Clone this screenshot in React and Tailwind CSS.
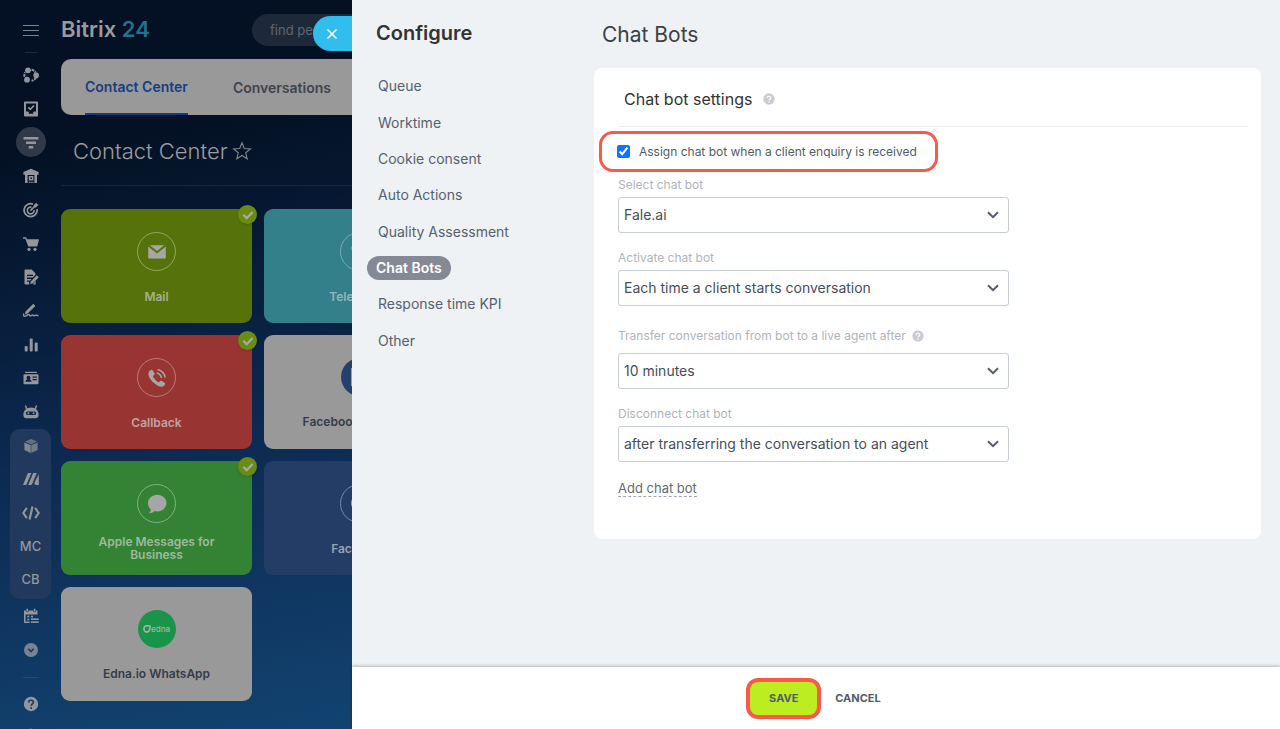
import React from "react";

/* ---------- Rail icons, drawn on a 16x16 grid ---------- */

function Icon({ children, className = "size-4" }) {
  return (
    <svg viewBox="0 0 16 16" className={className} fill="currentColor" aria-hidden="true">
      {children}
    </svg>
  );
}

const stroke = { fill: "none", stroke: "currentColor" };

const FeedIcon = () => (
  <Icon>
    <path d="M8.600 2.700a5.600 5.600 0 0 1 4 3M12.900 10.500a5.600 5.600 0 0 1-4.400 3.200M1.500 9.800a6.500 6.500 0 0 1 .6-4.500" {...stroke} strokeWidth="2" strokeDasharray="2.800 0.800" />
    <circle cx="5" cy="3.300" r="2.900" />
    <circle cx="13.200" cy="8.400" r="2.800" />
    <circle cx="4" cy="12.700" r="2.900" />
  </Icon>
);
const TaskIcon = () => (
  <Icon>
    <path fillRule="evenodd" d="M2 .6h12a1 1 0 0 1 1 1v12.800a1 1 0 0 1-1 1H2a1 1 0 0 1-1-1V1.600a1 1 0 0 1 1-1Zm1 2v8h2.200c.4 0 .6.3.6.6v1.600h4.400v-1.600c0-.3.200-.6.600-.6H13v-8H3Z" />
    <path d="m5.300 6.300 2 2L11 4.500" {...stroke} strokeWidth="1.700" />
  </Icon>
);
const FunnelIcon = () => (
  <Icon>
    <rect x="0.500" y="3" width="15" height="2.600" rx="0.600" />
    <rect x="3" y="7.500" width="10" height="2.600" rx="0.600" />
    <rect x="5.700" y="12" width="4.600" height="2.600" rx="0.600" />
  </Icon>
);
const StoreIcon = () => (
  <Icon>
    <path fillRule="evenodd" d="M8 .8 15.600 4v2.700H14V15H2V6.700H.4V4L8 .8ZM4.600 7v8h1.200v-1.300H7V15h.6v-1.300h1.200V15h.6v-1.300h1.200V15h.8V7H4.600Z" />
    <path fillRule="evenodd" d="M5.800 8h4.600v4.600H5.800V8Zm1.700 1.600v1.500H9V9.600H7.500Z" />
  </Icon>
);
const TargetIcon = () => (
  <Icon>
    <path d="M10 2.100A6.500 6.500 0 1 0 14 7" {...stroke} strokeWidth="1.700" />
    <path d="M8.500 5.200a3.400 3.400 0 1 0 2.500 2.600" {...stroke} strokeWidth="1.600" />
    <path d="M7.400 8.600 12.500 3.500" {...stroke} strokeWidth="1.700" />
    <path d="M10.700 3.300 13.400.4l.5 1.800 1.900.5-2.900 2.800-2 .1-.2-2.300Z" />
  </Icon>
);
const CartIcon = () => (
  <Icon>
    <path d="M0 1.200h2.700c.4 0 .7.2.8.6l.4 1.400h11.500c.4 0 .6.300.5.700l-1.500 5.900c-.1.400-.4.600-.8.600H5.200l-.5-1.300L2.400 2.700H0V1.200Z" />
    <circle cx="6" cy="13.300" r="1.600" />
    <circle cx="12" cy="13.300" r="1.600" />
  </Icon>
);
const DocEditIcon = () => (
  <Icon>
    <path fillRule="evenodd" d="M1.500 1.500c0-.5.400-1 1-1h6.200l3.700 3.700v1.900L9.900 8.600H4v1.300h4.600l-1.500 1.500H4v1.300h2.200V15.500H2.500a1 1 0 0 1-1-1v-13ZM4 5.700V7h6V5.700H4Z" />
    <path d="m7.300 15 .5-2.600 6-6.100 2 2-6 6.100-2.500.6Z" />
    <path d="M12.600 11.800v3.700H9.900" />
  </Icon>
);
const SignIcon = () => (
  <Icon>
    <path d="m2.500 8.500 7.300-7.200c.3-.3.700-.3 1 0l1.100 1.100c.3.300.3.700 0 1L4.600 10.600 1.800 11.400l.7-2.900Z" />
    <path d="M.6 10.500c-.6 2.600.6 3.200 2.400 2.300l2-1.200c1-.6 1.400.2 1.800.9.500.7 1.300.2 2-.3s1.300-.2 1.700.3c.7.800 1.500-.2 2.200-.4.700-.1 1.200.5 2.800.4" {...stroke} strokeWidth="1.400" />
  </Icon>
);
const ChartIcon = () => (
  <Icon>
    <rect x="1.700" y="9" width="3" height="5.500" rx="1" />
    <rect x="6.700" y="1.500" width="3" height="13" rx="1" />
    <rect x="11.700" y="5.500" width="3" height="9" rx="1" />
  </Icon>
);
const IdCardIcon = () => (
  <Icon>
    <rect x="2" y="1.800" width="12" height="1.300" rx="0.500" />
    <path fillRule="evenodd" d="M1.500 4.200h13c.6 0 1 .4 1 1v8c0 .6-.4 1-1 1h-13a1 1 0 0 1-1-1v-8c0-.6.400-1 1-1Zm4 1.600a1.900 1.900 0 0 0-1.900 1.900c0 .8.300 1.400.8 1.800-1.400.4-2 1.200-2 2.300h6.200c0-1.100-.6-1.900-2-2.300.5-.4.800-1 .8-1.800a1.900 1.900 0 0 0-1.900-1.900Zm4 .7v1.200h4.300V6.500H9.500Zm0 2.500v1.200h4.300V9H9.500Z" />
  </Icon>
);
const RobotIcon = () => (
  <Icon>
    <path d="m3.600 5-.9-3M12.400 5l.9-3" {...stroke} strokeWidth="1.400" strokeLinecap="round" />
    <path fillRule="evenodd" d="M8 3.600c4.400 0 7.600 2.900 7.600 7.200 0 2.200-.8 3.500-3 3.500H3.400c-2.200 0-3-1.300-3-3.500 0-4.300 3.200-7.200 7.600-7.200ZM4.600 7.400a1.800 1.800 0 0 0 0 3.600h6.800a1.800 1.800 0 0 0 0-3.600H4.600Z" />
    <circle cx="5.400" cy="9.200" r="1" />
    <circle cx="10.600" cy="9.200" r="1" />
  </Icon>
);
const CubeIcon = () => (
  <Icon>
    <path d="M8 .9 14 3.600 8 6.400 2 3.600 8 .9Z" opacity=".6" />
    <path d="M1.400 4.500 7.700 7.300v7.700l-6.300-3V4.500Z" opacity=".85" />
    <path d="M14.600 4.500 8.300 7.300v7.700l6.300-3V4.500Z" opacity=".7" />
  </Icon>
);
const StripesIcon = () => (
  <Icon>
    <path d="M4.900 2h3.400L3.600 13.200c-.2.500-.6.800-1.100.8H0L4.900 2Z" />
    <path d="M10.200 2h3.600L9 13.200c-.2.500-.6.800-1.100.8H5.200l5-12Z" />
    <path d="M15.800 3V14h-2.300c-1.600 0-2.400-1.200-1.900-2.500L15.800 3Z" />
  </Icon>
);
const CodeIcon = () => (
  <Icon className="size-[18px]">
    <path d="M4.300 3.500 1.200 8l3.100 4.500M11.700 3.500 14.800 8l-3.100 4.500M9.300 2.300 6.700 13.700" {...stroke} strokeWidth="1.900" />
  </Icon>
);
const CalendarIcon = () => (
  <Icon>
    <path d="M4.200.8v2.600M11.600.8v2.600" {...stroke} strokeWidth="1.600" />
    <path d="M1 2.400h2v1.700h2.400V2.400h5v1.700h2.400V2.400h1.700v4.200H2.600v6.800h4.100V15H1.800a.8.800 0 0 1-.8-.8V2.400Z" />
    <rect x="4.300" y="7.700" width="2" height="1.700" />
    <rect x="8" y="7.700" width="2" height="1.700" />
    <rect x="4.300" y="10.600" width="2" height="1.700" />
    <rect x="8" y="10.400" width="7.700" height="1.600" />
    <rect x="8" y="13.300" width="7.700" height="1.600" />
  </Icon>
);
const MoreIcon = () => (
  <Icon>
    <circle cx="8" cy="8" r="7" opacity=".8" />
    <path d="m5.300 6.800 2.700 2.700 2.700-2.700" fill="none" stroke="#113a66" strokeWidth="1.600" />
  </Icon>
);
const HelpIcon = () => (
  <Icon>
    <circle cx="8" cy="8" r="7.200" />
    <path d="M5.700 6.500c0-3 4.700-2.800 4.700-.2 0 1.700-2.300 1.700-2.300 3.500" fill="none" stroke="#123d69" strokeWidth="1.600" />
    <circle cx="8.100" cy="11.900" r="1" fill="#123d69" />
  </Icon>
);
const BellIcon = () => (
  <Icon>
    <path d="M8 .5c.8 0 1.300.5 1.300 1.300 2.200.6 3.500 2.400 3.500 4.800v3.600l1.500 2.300H1.700l1.500-2.300V6.600c0-2.400 1.300-4.200 3.500-4.800C6.700 1 7.200.5 8 .5Z" />
  </Icon>
);

/* ---------- Navigation rail ---------- */

const railMain = [
  ["Feed", FeedIcon],
  ["Tasks", TaskIcon],
  ["CRM", FunnelIcon],
  ["Inventory", StoreIcon],
  ["Marketing", TargetIcon],
  ["Store", CartIcon],
  ["Documents", DocEditIcon],
  ["e-Signature", SignIcon],
  ["Analytics", ChartIcon],
  ["Company", IdCardIcon],
  ["Automation", RobotIcon],
];

function RailButton({ label, active, children }) {
  return (
    <button
      type="button"
      aria-label={label}
      className={
        active
          ? "flex size-[30px] items-center justify-center rounded-full bg-[#2f3947]"
          : "flex size-[30px] items-center justify-center"
      }
    >
      {children}
    </button>
  );
}

function Rail() {
  return (
    <nav aria-label="Main" className="flex w-[61px] shrink-0 flex-col items-center text-[#93979d]">
      <button type="button" aria-label="Menu" className="mt-[14px] flex size-8 shrink-0 flex-col items-center justify-center gap-1 text-[#7d838b]">
        <span className="h-px w-4 bg-current" />
        <span className="h-px w-4 bg-current" />
        <span className="h-px w-4 bg-current" />
      </button>
      <span className="mt-1.5 h-px w-3 shrink-0 bg-[#1b2a3e]" />
      <ul className="mt-[5px] flex h-[371px] shrink-0 flex-col">
        {railMain.map(([label, Glyph]) => (
          <li key={label} className="flex flex-1 items-center">
            <RailButton label={label} active={label === "CRM"}>
              <Glyph />
            </RailButton>
          </li>
        ))}
      </ul>
      <ul className="flex h-[170px] w-[41px] shrink-0 flex-col items-center rounded-[10px] bg-[#20395c] pb-0.5">
        <li className="flex flex-1 items-center">
          <RailButton label="Apps"><CubeIcon /></RailButton>
        </li>
        <li className="flex flex-1 items-center">
          <RailButton label="Market"><StripesIcon /></RailButton>
        </li>
        <li className="flex flex-1 items-center">
          <RailButton label="Developer"><CodeIcon /></RailButton>
        </li>
        <li className="flex flex-1 items-center">
          <a href="#mc" className="text-[13px] font-medium">MC</a>
        </li>
        <li className="flex flex-1 items-center">
          <a href="#cb" className="text-[13px] font-medium">CB</a>
        </li>
      </ul>
      <div className="mt-0.5 flex shrink-0 flex-col gap-1">
        <RailButton label="Calendar"><CalendarIcon /></RailButton>
        <RailButton label="More"><MoreIcon /></RailButton>
      </div>
      <span className="mt-3 h-px w-4 shrink-0 bg-[#264a71]" />
      <div className="mt-[11px] flex shrink-0 flex-col gap-0.5">
        <RailButton label="Help"><HelpIcon /></RailButton>
        <RailButton label="Notifications"><BellIcon /></RailButton>
      </div>
    </nav>
  );
}

/* ---------- Contact Center ---------- */

const MailGlyph = () => (
  <svg viewBox="0 0 18 14" className="w-[18px] text-[#a6a6a6]" fill="currentColor" aria-hidden="true">
    <path d="M1.800.3h14.400L9 6 1.800.3Z" />
    <path d="M.2 1.500 9 8.400l8.800-6.900v11.300c0 .5-.3.800-.8.800H1c-.5 0-.8-.3-.8-.8V1.500Z" />
  </svg>
);
const CallGlyph = () => (
  <svg viewBox="0 0 20 20" className="w-5 text-[#a6a6a6]" fill="currentColor" aria-hidden="true">
    <path d="M2.600 2.900c1.200-1.200 2.300-1.500 3-.7l1.800 2.900c.4.700.3 1.400-.3 1.900l-.8.700c-.4.400-.3.800 0 1.400a14 14 0 0 0 4.300 4.700c.6.400 1.200.5 1.600.1l.8-.7c.5-.5 1.200-.5 1.900-.1l2.700 1.700c.8.500.7 1.400-.3 2.600-1.500 1.700-3.700 1.800-6.600.3A20 20 0 0 1 2.400 9.700C1 6.800 1 4.500 2.600 2.900Z" />
    <path d="M9.700 5a6 6 0 0 1 4.700 5" fill="none" stroke="currentColor" strokeWidth="1.600" />
    <path d="M10.600 1.500a10 10 0 0 1 7.600 8" fill="none" stroke="currentColor" strokeWidth="1.600" />
  </svg>
);
const BubbleGlyph = () => (
  <svg viewBox="0 0 20 20" className="w-5 text-[#a6a6a6]" fill="currentColor" aria-hidden="true">
    <path d="M10.300.8c5.200 0 9.200 3.700 9.200 8.300s-4 8.300-9.200 8.300c-.9 0-1.800-.1-2.700-.3-1.500 1.600-3.300 2.200-5.700 2 1.300-1 1.800-2 1.900-3.500C2.100 14 1 11.700 1 9.100 1 4.500 5.100.8 10.300.8Z" />
  </svg>
);
const FormGlyph = () => (
  <svg viewBox="0 0 18 18" className="w-[18px] text-[#9aa3b3]" fill="none" stroke="currentColor" strokeWidth="2" aria-hidden="true">
    <path d="M1 1h16v16H1zM5 6h8M5 11h8" />
  </svg>
);
const EdnaGlyph = () => (
  <span className="flex items-center text-[#a3b5aa]">
    <svg viewBox="0 0 10 10" className="size-2" aria-hidden="true">
      <path d="M2 1.800C4 .9 6.600.7 8.700 1.300 9 4.400 8.200 7.600 5.600 8.800 3 9.300 1.300 7.500 1.200 5.200c0-1.500.2-2.600.8-3.400Z" fill="none" stroke="currentColor" strokeWidth="1.900" />
    </svg>
    <span className="text-[8px] leading-none font-medium">edna</span>
  </span>
);

const channels = [
  { name: "Mail", card: "bg-[#56730b] text-[#a7b08f]", ring: "border border-[#94a46a] size-[39px]", Glyph: MailGlyph, on: true },
  { name: "Telephony", card: "bg-[#34808a] text-[#95b5b9]", ring: "border border-[#79aab0] size-[39px]", Glyph: CallGlyph },
  { name: "Callback", card: "bg-[#983432] text-[#c0a3a3]", ring: "border border-[#b97c7b] size-[39px]", Glyph: CallGlyph, on: true },
  { name: "Facebook Lead Ads", card: "bg-[#999999] text-[#363c47]", ring: "bg-[#24406d] size-[38px]", Glyph: FormGlyph },
  { name: "Apple Messages for Business", card: "bg-[#348234] text-[#9fb99f]", ring: "border border-[#82b082] size-[39px]", Glyph: BubbleGlyph, on: true },
  { name: "Facebook", card: "bg-[#233d66] text-[#9ba3b0]", ring: "border border-[#7885a0] size-[39px]", Glyph: BubbleGlyph },
  { name: "Edna.io WhatsApp", card: "bg-[#999999] text-[#363c47]", ring: "bg-[#189548] size-[38px]", Glyph: EdnaGlyph },
];

function ChannelCard({ name, card, ring, Glyph, on }) {
  return (
    <li className="relative">
      <button type="button" className={`flex h-[114px] w-full flex-col items-center rounded-[9px] pt-[23px] ${card}`}>
        <span className={`flex shrink-0 items-center justify-center rounded-full ${ring}`}>
          <Glyph />
        </span>
        <span className="mt-1.5 flex h-[38px] w-[136px] items-center justify-center text-center text-[12px] leading-[13px] font-semibold">
          {name}
        </span>
      </button>
      {on && (
        <span className="absolute -top-1 -right-[5px] flex size-[19px] items-center justify-center rounded-full bg-[#6a8b14] shadow-sm">
          <svg viewBox="0 0 12 12" className="size-3" fill="none" stroke="#a8a8a8" strokeWidth="2.200" aria-hidden="true">
            <path d="m1.300 5.700 3.400 3.400 6-6.200" />
          </svg>
        </span>
      )}
    </li>
  );
}

function ContactCenter() {
  return (
    <div className="flex min-w-0 flex-1 flex-col">
      <header className="flex h-[59px] shrink-0 items-center justify-between">
        <p className="text-[22px] font-semibold whitespace-nowrap text-[#989a9e]">
          Bitrix <span className="text-[#21728f]">24</span>
        </p>
        <input
          type="search"
          aria-label="Search"
          placeholder="find people, documents, and more"
          className="h-8 w-[100px] shrink-0 rounded-l-full bg-[#1d2939] pl-[18px] text-[13px] placeholder:text-[#5d6673] focus:outline-none"
        />
      </header>
      <nav aria-label="Sections" className="flex h-14 shrink-0 gap-[45px] rounded-l-[10px] bg-[#999999] pl-6 text-[14px] font-semibold whitespace-nowrap">
        <a href="#contact" aria-current="page" className="flex items-center border-b-2 border-[#153a83] text-[#173d83]">Contact Center</a>
        <a href="#conversations" className="flex items-center text-[#3f444d]">Conversations</a>
      </nav>
      <div className="flex h-[71px] shrink-0 items-center gap-1 border-b border-[#17263b] pt-0.5 pl-3">
        <h1 className="text-[22px] font-light whitespace-nowrap text-[#9a9da2]">Contact Center</h1>
        <button type="button" aria-label="Add to favorites" className="text-[#81868e]">
          <svg viewBox="0 0 20 20" className="size-5" fill="none" stroke="currentColor" strokeWidth="1.100" aria-hidden="true">
            <path d="m10 1.800 2.300 5.700 6.100.4-4.700 3.900 1.500 6L10 14.500l-5.200 3.300 1.500-6L1.600 7.900l6.100-.4L10 1.800Z" />
          </svg>
        </button>
      </div>
      <ul className="mt-[23px] grid grid-cols-[191px_191px] gap-3">
        {channels.map((c) => (
          <ChannelCard key={c.name} {...c} />
        ))}
      </ul>
    </div>
  );
}

/* ---------- Settings slider ---------- */

const sections = ["Queue", "Worktime", "Cookie consent", "Auto Actions", "Quality Assessment", "Chat Bots", "Response time KPI", "Other"];

function Hint() {
  return (
    <button type="button" aria-label="Help" className="text-[#c9cdd2]">
      <svg viewBox="0 0 12 12" className="size-3" aria-hidden="true">
        <circle cx="6" cy="6" r="5.700" fill="currentColor" />
        <path d="M4.300 4.900c0-2.200 3.500-2.100 3.500-.2C7.800 6 6.100 6 6.100 7.300" fill="none" stroke="#fff" strokeWidth="1.200" />
        <circle cx="6.100" cy="9" r=".8" fill="#fff" />
      </svg>
    </button>
  );
}

function SelectField({ id, label, value, hint }) {
  return (
    <div className="flex flex-col gap-[3px]">
      <div className={hint ? "flex items-center gap-1.5 py-[5px]" : "flex items-center"}>
        <label htmlFor={id} className="text-[12px] leading-[18px] text-[#b0b4ba]">{label}</label>
        {hint && <Hint />}
      </div>
      <div className="relative">
        <select id={id} className="h-9 w-full appearance-none rounded-[3px] border border-[#c6cdd3] bg-white pr-8 pb-px pl-[5px] text-[14px] text-[#474d5a]">
          <option>{value}</option>
        </select>
        <svg viewBox="0 0 12 8" className="pointer-events-none absolute top-[14px] right-[10px] w-3" fill="none" stroke="#525c69" strokeWidth="2" aria-hidden="true">
          <path d="m1 1.200 5 5 5-5" />
        </svg>
      </div>
    </div>
  );
}

function SettingsSlider() {
  return (
    <section aria-label="Configure" className="relative flex min-w-0 flex-1 flex-col bg-[#eef2f5]">
      <button type="button" aria-label="Close" className="absolute top-4 right-full flex h-[35px] w-[39px] items-center justify-center rounded-l-full bg-[#31bdee] pr-0.5 text-white">
        <svg viewBox="0 0 12 12" className="size-3" fill="none" stroke="currentColor" strokeWidth="1.600" aria-hidden="true">
          <path d="m1.500 1.500 9 9m0-9-9 9" />
        </svg>
      </button>
      <div className="flex min-h-0 flex-1">
        <aside className="w-[242px] shrink-0 pt-[17px] pl-[15px]">
          <h2 className="pl-[9px] text-[20px] leading-8 font-semibold text-[#333333]">Configure</h2>
          <ul className="mt-[19px] flex h-[291px] flex-col text-[14px] text-[#58606f]">
            {sections.map((s) => (
              <li key={s} className="flex flex-1 items-center">
                {s === "Chat Bots" ? (
                  <a href="#chat-bots" aria-current="page" className="rounded-full bg-[#848995] px-[9px] py-0.5 leading-5 font-semibold text-white">{s}</a>
                ) : (
                  <a href="#section" className="pl-[11px] leading-5">{s}</a>
                )}
              </li>
            ))}
          </ul>
        </aside>
        <main className="flex min-w-0 flex-1 flex-col pt-[19px] pr-[19px]">
          <h1 className="pl-2 text-[21px] leading-8 text-[#3c4046]">Chat Bots</h1>
          <form className="mt-[17px] rounded-[8px] bg-white pr-[13px] pb-10 pl-6">
            <div className="flex h-[59px] items-center gap-[11px] border-b border-[#edeef0] pt-1 pl-[6px]">
              <h2 className="text-[16px] text-[#333333]">Chat bot settings</h2>
              <Hint />
            </div>
            <label className="mt-1 -ml-[19px] flex h-[41px] w-[339px] items-center gap-[9px] rounded-[14px] border-[3px] border-[#f9594b] pl-[15px] text-[12px] whitespace-nowrap text-[#525c69]">
              <input type="checkbox" defaultChecked className="size-[13px] accent-[#0a75ff]" />
              Assign chat bot when a client enquiry is received
            </label>
            <div className="mt-1 flex max-w-[391px] flex-col gap-4">
              <SelectField id="bot" label="Select chat bot" value="Fale.ai" />
              <SelectField id="activate" label="Activate chat bot" value="Each time a client starts conversation" />
              <SelectField id="transfer" label="Transfer conversation from bot to a live agent after" value="10 minutes" hint />
              <SelectField id="disconnect" label="Disconnect chat bot" value="after transferring the conversation to an agent" />
            </div>
            <a href="#add" className="mt-[18px] inline-block border-b border-dashed border-[#a0a5ae] text-[13px] leading-4 text-[#626a78]">Add chat bot</a>
          </form>
        </main>
      </div>
      <footer className="flex h-[62px] shrink-0 items-center justify-center bg-white shadow-[0_-1px_3px_rgba(0,0,0,0.25)]">
        <button type="button" className="h-[41px] w-[75px] rounded-[12px] border-4 border-[#f9594b] bg-[#bbed21] text-[11px] font-bold text-[#525c69]">SAVE</button>
        <button type="button" className="h-[41px] pr-[5px] pl-[14px] text-[11px] font-bold text-[#525c69]">CANCEL</button>
      </footer>
    </section>
  );
}

export default function App() {
  return (
    <div className="flex h-screen overflow-hidden bg-[#04122a] font-[Inter,sans-serif]">
      <div className="flex w-[352px] shrink-0 overflow-hidden bg-linear-170 from-[#041124] from-20% via-[#0c2a52] via-60% to-[#124370]">
        <Rail />
        <ContactCenter />
      </div>
      <SettingsSlider />
    </div>
  );
}
